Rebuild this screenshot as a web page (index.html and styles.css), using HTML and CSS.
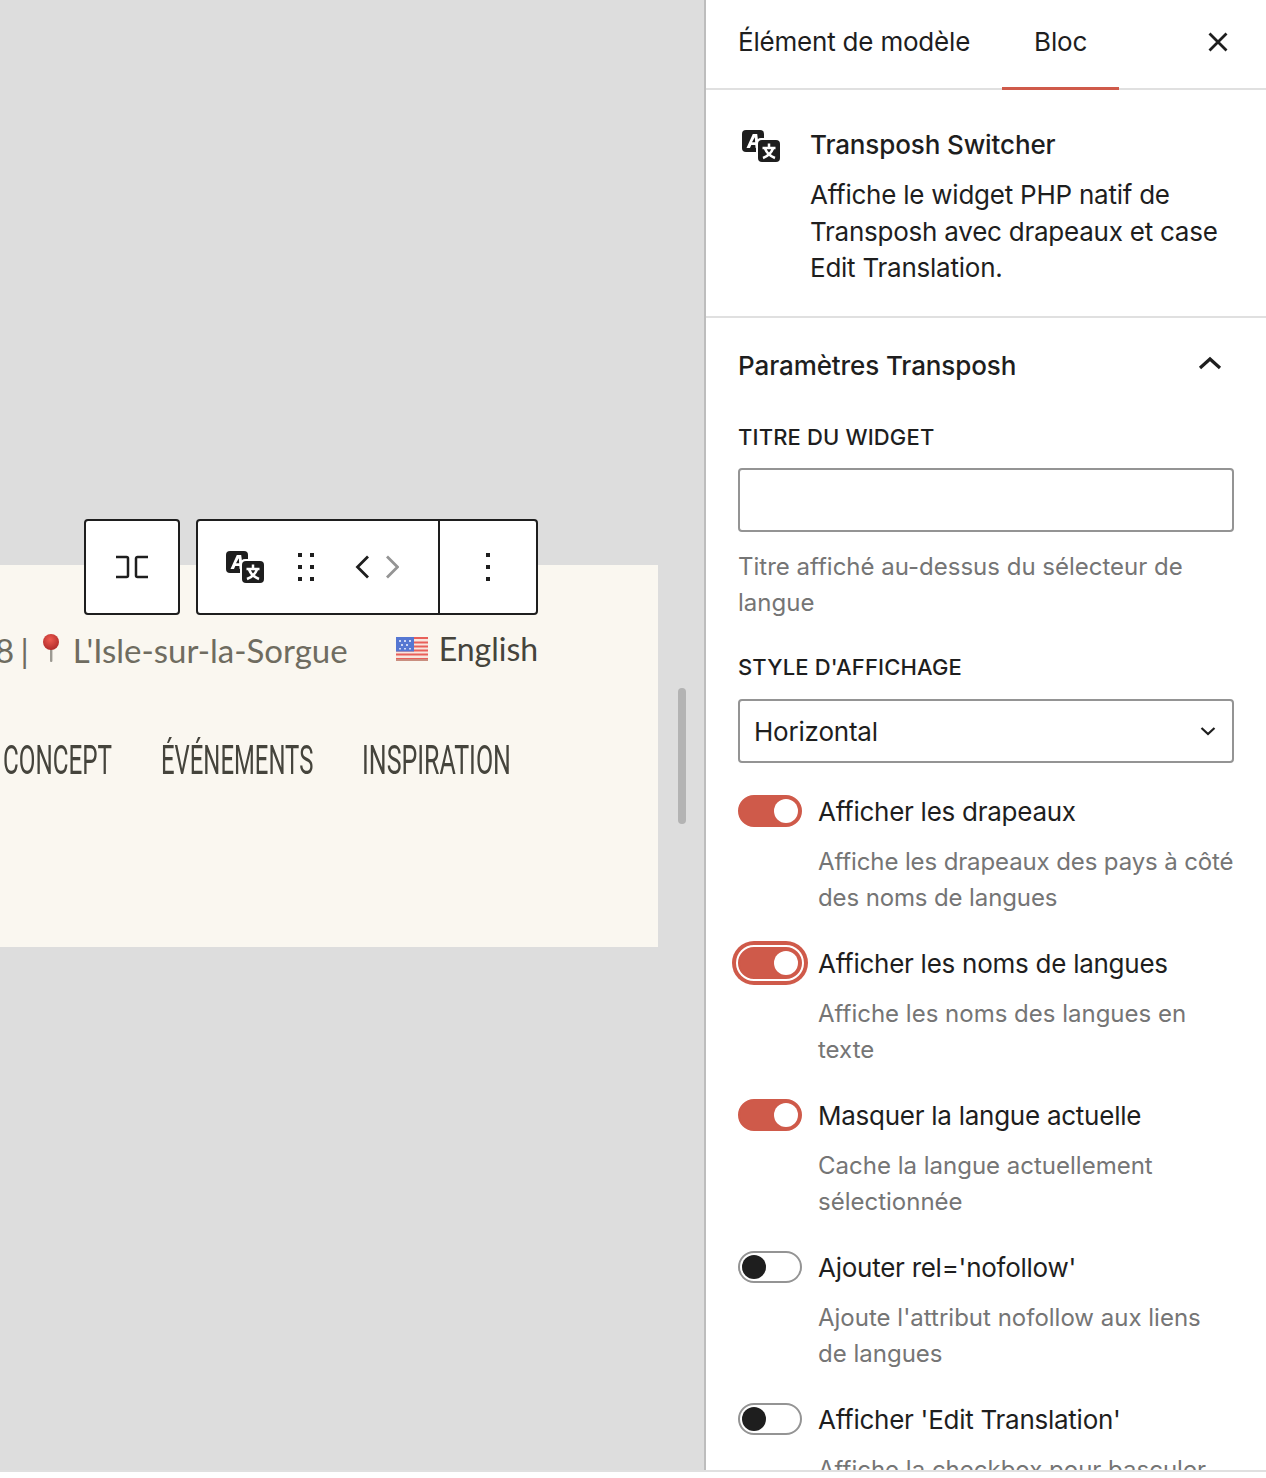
FILE: index.html
```html
<!doctype html>
<html lang="fr">
<head>
<meta charset="UTF-8">
<title>Transposh Switcher</title>
<link rel="stylesheet" href="styles.css">
</head>
<body>
<div class="editor">
  <main class="canvas">
    <section class="card">
      <p class="card-info">
        <span class="card-phone">8 |</span>
        <svg class="pin" viewBox="0 0 16 28" width="16" height="28" aria-hidden="true">
          <defs><radialGradient id="pinball" cx="45%" cy="35%" r="60%"><stop offset="0" stop-color="#ee5a50"/><stop offset="1" stop-color="#b52f2d"/></radialGradient></defs>
          <rect x="7" y="14" width="2.400" height="14" rx="1" fill="#9c9a92"/>
          <circle cx="8" cy="8" r="8" fill="url(#pinball)"/>
        </svg>
        <span class="card-place">L'Isle-sur-la-Sorgue</span>
        <span class="card-lang">
          <svg class="flag" viewBox="0 0 32 24" width="32" height="24" aria-hidden="true">
            <rect width="32" height="24" fill="#f8e6df"/>
            <path d="M0 0h32v2H0zM0 4.500h32v2H0zM0 8.500h32v2H0zM0 12.500h32v2H0zM0 16.500h32v2H0zM0 21h32v3H0z" fill="#e8605a"/>
            <rect y="22" width="32" height="2" fill="#c98f80"/>
            <rect width="18" height="14.500" fill="#5577d2"/>
            <path d="M3 3h2v2H3zM8 3h2v2H8zM13 3h2v2h-2zM5 7h2v2H5zM10 7h2v2h-2zM3 11h2v1.500H3zM8 11h2v1.500H8zM13 11h2v1.500h-2z" fill="#cdd7f4"/>
          </svg>
          English
        </span>
      </p>
      <nav class="card-nav">
        <a class="nav-concept" href="#"><span>CONCEPT</span></a>
        <a class="nav-events" href="#"><span>ÉVÉNEMENTS</span></a>
        <a class="nav-inspi" href="#"><span>INSPIRATION</span></a>
      </nav>
    </section>

    <div class="toolbar">
      <div class="tool-group tool-parent">
        <svg viewBox="0 0 34 26" width="34" height="26" aria-hidden="true">
          <path d="M1 3h10.500a1.500 1.500 0 0 1 1.500 1.500v17a1.500 1.500 0 0 1-1.500 1.500H1M33 3H22.500A1.500 1.500 0 0 0 21 4.500v17a1.500 1.500 0 0 0 1.500 1.500H33" fill="none" stroke="#1e1e1e" stroke-width="2.500"/>
        </svg>
      </div>
      <div class="tool-group tool-main">
        <div class="tool-move">
          <svg class="lang-icon" viewBox="0 0 38 32" width="38" height="32" aria-hidden="true">
            <rect width="22" height="22" rx="4" fill="#1e1e1e"/>
            <path fill-rule="evenodd" d="M4.500 18L10.800 4h4.400l1.800 14h-3.400l-.3-3h-4l-1.300 3zM10 12.300h3.200l-.4-5z" fill="#fff"/>
            <rect x="14" y="8" width="24" height="24" rx="5" fill="#fff"/>
            <rect x="16" y="10" width="22" height="22" rx="4" fill="#1e1e1e"/>
            <path d="M20.500 18h13M27 13.500v4M31 18.500c-1.500 4-5 7.500-10 9.500M23 18.500c1.500 4 5 7.500 10 9.500" fill="none" stroke="#fff" stroke-width="2.500"/>
          </svg>
          <svg class="grip" viewBox="0 0 16 28" width="16" height="28" aria-hidden="true">
            <path d="M0 0h4v4H0zM12 0h4v4h-4zM0 12h4v4H0zM12 12h4v4h-4zM0 24h4v4H0zM12 24h4v4h-4z" fill="#1e1e1e"/>
          </svg>
          <svg class="arrows" viewBox="0 0 44 24" width="44" height="24" aria-hidden="true">
            <path d="M13 1.500L2.500 12 13 22.500" fill="none" stroke="#1e1e1e" stroke-width="2.800"/>
            <path d="M32 1.500L42.500 12 32 22.500" fill="none" stroke="#949494" stroke-width="2.800"/>
          </svg>
        </div>
        <div class="tool-more">
          <svg viewBox="0 0 4 28" width="4" height="28" aria-hidden="true">
            <path d="M0 0h4v4H0zM0 12h4v4H0zM0 24h4v4H0z" fill="#1e1e1e"/>
          </svg>
        </div>
      </div>
    </div>

    <div class="canvas-scroll"></div>
  </main>

  <aside class="sidebar">
    <header class="tabs">
      <div class="tab">Élément de modèle</div>
      <div class="tab is-active">Bloc</div>
      <button class="close" type="button" aria-label="Fermer">
        <svg viewBox="0 0 20 20" width="20" height="20" aria-hidden="true">
          <path d="M1.500 1.500l17 17M18.500 1.500l-17 17" fill="none" stroke="#1e1e1e" stroke-width="2.800"/>
        </svg>
      </button>
    </header>

    <section class="block-card">
      <svg class="lang-icon" viewBox="0 0 38 32" width="38" height="32" aria-hidden="true">
        <rect width="22" height="22" rx="4" fill="#1e1e1e"/>
        <path fill-rule="evenodd" d="M4.500 18L10.800 4h4.400l1.800 14h-3.400l-.3-3h-4l-1.300 3zM10 12.300h3.200l-.4-5z" fill="#fff"/>
        <rect x="14" y="8" width="24" height="24" rx="5" fill="#fff"/>
        <rect x="16" y="10" width="22" height="22" rx="4" fill="#1e1e1e"/>
        <path d="M20.500 18h13M27 13.500v4M31 18.500c-1.500 4-5 7.500-10 9.500M23 18.500c1.500 4 5 7.500 10 9.500" fill="none" stroke="#fff" stroke-width="2.500"/>
      </svg>
      <div class="block-text">
        <h2>Transposh Switcher</h2>
        <p>Affiche le widget PHP natif de Transposh avec drapeaux et case Edit Translation.</p>
      </div>
    </section>

    <section class="panel">
      <div class="panel-head">
        <h2>Paramètres Transposh</h2>
        <svg viewBox="0 0 24 14" width="24" height="14" aria-hidden="true">
          <path d="M2 12L12 3l10 9" fill="none" stroke="#1e1e1e" stroke-width="3.200"/>
        </svg>
      </div>

      <div class="field">
        <label class="field-label">TITRE DU WIDGET</label>
        <div class="input"></div>
        <p class="help">Titre affiché au-dessus du sélecteur de langue</p>
      </div>

      <div class="field field-select">
        <label class="field-label">STYLE D'AFFICHAGE</label>
        <div class="input select">
          <span>Horizontal</span>
          <svg viewBox="0 0 16 10" width="16" height="10" aria-hidden="true">
            <path d="M1.500 2L8 8l6.500-6" fill="none" stroke="#1e1e1e" stroke-width="2.200"/>
          </svg>
        </div>
      </div>

      <div class="toggle-row">
        <span class="toggle is-on"></span>
        <div class="toggle-body">
          <div class="toggle-label">Afficher les drapeaux</div>
          <p class="help help-tight">Affiche les drapeaux des pays à côté des noms de langues</p>
        </div>
      </div>
      <div class="toggle-row">
        <span class="toggle is-on is-focus"></span>
        <div class="toggle-body">
          <div class="toggle-label">Afficher les noms de langues</div>
          <p class="help">Affiche les noms des langues en texte</p>
        </div>
      </div>
      <div class="toggle-row">
        <span class="toggle is-on"></span>
        <div class="toggle-body">
          <div class="toggle-label">Masquer la langue actuelle</div>
          <p class="help">Cache la langue actuellement sélectionnée</p>
        </div>
      </div>
      <div class="toggle-row">
        <span class="toggle"></span>
        <div class="toggle-body">
          <div class="toggle-label">Ajouter rel='nofollow'</div>
          <p class="help">Ajoute l'attribut nofollow aux liens de langues</p>
        </div>
      </div>
      <div class="toggle-row">
        <span class="toggle"></span>
        <div class="toggle-body">
          <div class="toggle-label">Afficher 'Edit Translation'</div>
          <p class="help">Affiche la checkbox pour basculer</p>
        </div>
      </div>
    </section>
  </aside>
</div>
<footer class="page-foot"></footer>
</body>
</html>
```

FILE: styles.css
```css
* {
  box-sizing: border-box;
}
html, body {
  height: 100%;
}
body {
  margin: 0;
  background-color: #fff;
  color: #1e1e1e;
  font-family: "Inter", "Liberation Sans", sans-serif;
  overflow: hidden;
}
p, h2 {
  margin: 0;
  font-weight: 400;
}
.editor {
  display: flex;
  height: 1470px;
  overflow: hidden;
}
.page-foot {
  height: 2px;
  background-color: #e0e0e0;
}

/* canvas */
.canvas {
  width: 706px;
  flex: none;
  background-color: #ddd;
  border-right: 2px solid #bdbdbd;
  padding-top: 565px;
  position: relative;
}
.card {
  width: 658px;
  height: 382px;
  background-color: #faf7f0;
  overflow: hidden;
}
.card-info {
  display: flex;
  align-items: center;
  height: 34px;
  margin-top: 68px;
  font-family: "Lato", sans-serif;
  font-size: 33px;
  color: #6f6c60;
  white-space: nowrap;
}
.card-phone {
  margin-left: -5px;
  word-spacing: -2px;
}
.pin {
  margin-left: 14px;
  margin-top: -4px;
}
.card-place {
  margin-left: 14px;
}
.card-lang {
  display: flex;
  align-items: center;
  gap: 11px;
  margin-left: 48px;
  margin-top: -3px;
  font-size: 32px;
  color: #45443c;
}
.flag {
  filter: blur(.4px);
}
.card-nav {
  display: flex;
  gap: 49px;
  margin-top: 74px;
  padding-left: 3px;
}
.card-nav a {
  display: block;
  font-family: "Roboto", sans-serif;
  font-size: 40px;
  line-height: 40px;
  color: #45443c;
  text-decoration: none;
  white-space: nowrap;
}
.card-nav span {
  display: inline-block;
  transform-origin: left center;
}
.nav-concept {
  width: 109px;
}
.nav-concept span {
  transform: scaleX(.605);
}
.nav-events {
  width: 152px;
}
.nav-events span {
  transform: scaleX(.597);
}
.nav-inspi {
  width: 148px;
}
.nav-inspi span {
  transform: scaleX(.625);
}

/* block toolbar, floats over the canvas */
.toolbar {
  position: absolute;
  top: 519px;
  left: 84px;
  display: flex;
  gap: 16px;
  height: 96px;
}
.tool-group {
  display: flex;
  align-items: center;
  justify-content: center;
  background-color: #fff;
  border: 2px solid #1e1e1e;
  border-radius: 4px;
}
.tool-parent {
  width: 96px;
}
.tool-main {
  width: 342px;
}
.tool-move {
  display: flex;
  align-items: center;
  width: 242px;
  height: 100%;
  padding-left: 28px;
  border-right: 2px solid #1e1e1e;
}
.grip {
  margin-left: 34px;
}
.arrows {
  margin-left: 41px;
}
.tool-more {
  flex: 1;
  display: flex;
  align-items: center;
  justify-content: center;
}
.canvas-scroll {
  position: absolute;
  top: 688px;
  left: 678px;
  width: 8px;
  height: 136px;
  border-radius: 4px;
  background-color: #b3b3b3;
}

/* sidebar */
.sidebar {
  flex: 1;
  min-width: 0;
  overflow: hidden;
}
.tabs {
  display: flex;
  align-items: stretch;
  height: 90px;
  border-bottom: 2px solid #e0e0e0;
}
.tab {
  padding: 0 32px;
  font-size: 26px;
  line-height: 84px;
  letter-spacing: -.2px;
  position: relative;
}
.tab.is-active::after {
  content: '';
  position: absolute;
  left: 0;
  right: 0;
  bottom: -2px;
  height: 3px;
  background-color: #cf5a4a;
}
.close {
  margin-left: auto;
  width: 96px;
  height: 84px;
  padding: 0;
  border: 0;
  background: none;
  display: flex;
  align-items: center;
  justify-content: center;
}
.block-card {
  display: flex;
  height: 228px;
  padding: 39px 32px 0;
  border-bottom: 2px solid #e0e0e0;
}
.block-card .lang-icon {
  flex: none;
  margin: 1px 0 0 4px;
}
.block-text {
  margin-left: 30px;
  font-size: 26px;
}
.block-text h2 {
  font-size: 26px;
  line-height: 32px;
  font-weight: 500;
  letter-spacing: -.12px;
}
.block-text p {
  margin-top: 16px;
  line-height: 36.500px;
  letter-spacing: -.24px;
}
.panel {
  padding: 0 32px;
}
.panel-head {
  display: flex;
  align-items: center;
  justify-content: space-between;
  height: 94px;
  padding-right: 12px;
}
.panel-head h2 {
  font-size: 26px;
  font-weight: 500;
  letter-spacing: -.1px;
}
.panel-head svg {
  margin-bottom: 5px;
}
.field-label {
  display: block;
  font-size: 22px;
  line-height: 32px;
  font-weight: 500;
  letter-spacing: .15px;
}
.field {
  margin-top: 9px;
}
.input {
  width: 100%;
  height: 64px;
  margin-top: 15px;
  border: 2px solid #949494;
  border-radius: 4px;
  background-color: #fff;
}
.select {
  display: flex;
  align-items: center;
  justify-content: space-between;
  padding: 0 16px 0 14px;
  font-size: 26px;
  letter-spacing: -.2px;
}
.help {
  font-size: 24px;
  line-height: 36px;
  color: #757575;
}
.help-tight {
  letter-spacing: -.12px;
}
.field .help {
  margin-top: 17px;
}
.field-select {
  margin-top: 30px;
}
.field-select .input {
  margin-top: 16px;
}
.toggle-row {
  display: flex;
  margin-top: 31px;
}
.field-select + .toggle-row {
  margin-top: 32px;
}
.toggle {
  flex: none;
  width: 64px;
  height: 32px;
  border: 2px solid #949494;
  border-radius: 16px;
  position: relative;
  background-color: #fff;
}
.toggle::after {
  content: '';
  position: absolute;
  top: 2px;
  left: 2px;
  width: 24px;
  height: 24px;
  border-radius: 50%;
  background-color: #1e1e1e;
}
.toggle.is-on {
  background-color: #cf5a4a;
  border-color: #cf5a4a;
}
.toggle.is-on::after {
  left: auto;
  right: 2px;
  background-color: #fff;
}
.toggle.is-focus {
  outline: 2px solid #fff;
  box-shadow: 0 0 0 6px #cf5a4a;
}
.toggle-body {
  margin-left: 16px;
  padding-top: 1px;
}
.toggle-label {
  font-size: 26px;
  line-height: 32px;
  letter-spacing: -.26px;
}
.toggle-body .help {
  margin-top: 16px;
}
```
